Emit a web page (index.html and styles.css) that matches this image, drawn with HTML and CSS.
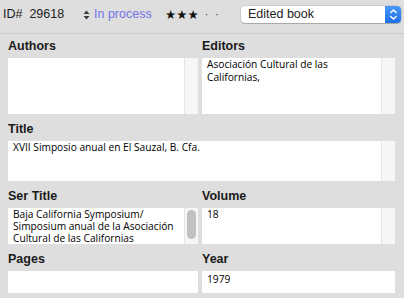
FILE: index.html
```html
<!DOCTYPE html>
<html>
<head>
<meta charset="utf-8">
<link rel="stylesheet" href="styles.css">
</head>
<body>
<div class="toolbar">
  <span class="tb-id">ID#&nbsp; 29618</span>
  <span class="tb-status">
    <svg class="updown" width="7" height="10" viewBox="0 0 7 10"><path d="M3.5 0.5 L6.5 4 H0.5 Z M3.5 9.5 L6.5 6 H0.5 Z" fill="#3a3a3a"/></svg>
    <span class="status-text">In process</span>
  </span>
  <span class="tb-stars"><span class="stars">★★★</span><span class="dot">·</span><span class="dot">·</span></span>
  <div class="popup">
    <span class="popup-label">Edited book</span>
    <span class="popup-btn">
      <svg width="9" height="13" viewBox="0 0 9 13"><path d="M1.8 4.6 L4.5 1.9 L7.2 4.6 M1.8 8.4 L4.5 11.1 L7.2 8.4" fill="none" stroke="#fff" stroke-width="1.4" stroke-linecap="round" stroke-linejoin="round"/></svg>
    </span>
  </div>
</div>
<div class="form">
  <div class="field">
    <div class="label">Authors</div>
    <div class="box h-authors"><div class="text"></div><div class="track"></div></div>
  </div>
  <div class="field">
    <div class="label">Editors</div>
    <div class="box h-authors"><div class="text">Asociación Cultural de las Californias,</div><div class="track"></div></div>
  </div>
  <div class="field wide">
    <div class="label">Title</div>
    <div class="box h-title"><div class="text">XVII Simposio anual en El Sauzal, B. Cfa.</div><div class="track"></div></div>
  </div>
  <div class="field">
    <div class="label">Ser Title</div>
    <div class="box h-ser"><div class="text tight">Baja California Symposium/ Simposium anual de la Asociación Cultural de las Californias</div><div class="track"><div class="thumb"></div></div></div>
  </div>
  <div class="field">
    <div class="label">Volume</div>
    <div class="box h-ser"><div class="text">18</div><div class="track"></div></div>
  </div>
  <div class="field">
    <div class="label">Pages</div>
    <div class="box h-single"><div class="text single"></div></div>
  </div>
  <div class="field">
    <div class="label">Year</div>
    <div class="box h-single"><div class="text single">1979</div></div>
  </div>
</div>
</body>
</html>
```

FILE: styles.css
```css
html, body {
  margin: 0;
  padding: 0;
  background: #dedede;
}
body {
  width: 404px;
  height: 298px;
  overflow: hidden;
  font-family: "Liberation Sans", Arial, sans-serif;
  color: #1c1c1c;
}
.toolbar {
  display: flex;
  align-items: flex-start;
  height: 27px;
  padding: 6px 0 0 3px;
  border-bottom: 1px solid #cdcdcd;
  font-size: 12.5px;
  line-height: 17px;
}
.tb-id {
  width: 80px;
  color: #222;
}
.tb-status {
  width: 82px;
  display: flex;
  align-items: center;
  height: 17px;
}
.updown {
  margin-right: 4px;
}
.status-text {
  color: #7474e6;
}
.tb-stars {
  width: 76px;
  display: flex;
  align-items: center;
  height: 17px;
}
.stars {
  font-family: "DejaVu Sans", sans-serif;
  font-size: 12.5px;
  letter-spacing: 0;
  color: #111;
}
.dot {
  font-family: "DejaVu Sans", sans-serif;
  font-size: 11px;
  margin-left: 6px;
  color: #444;
}
.dot + .dot {
  margin-left: 7px;
}
.popup {
  width: 160px;
  height: 17px;
  box-sizing: border-box;
  display: flex;
  background: #fff;
  border-radius: 4px;
  box-shadow: 0 0 0 0.5px rgba(0,0,0,0.18), 0 1px 1px rgba(0,0,0,0.18);
}
.popup-label {
  flex: 1;
  padding-left: 7px;
  font-size: 12.5px;
  line-height: 17px;
  color: #222;
}
.popup-btn {
  width: 16px;
  height: 17px;
  display: flex;
  align-items: center;
  justify-content: center;
  background: linear-gradient(#4a97f8, #1f6fe6);
  border-radius: 0 4px 4px 0;
}
.form {
  display: grid;
  grid-template-columns: 190px 193px;
  column-gap: 4px;
  row-gap: 7px;
  padding: 4px 9px 0 8px;
}
.field.wide {
  grid-column: 1 / span 2;
}
.label {
  font-weight: bold;
  font-size: 12.5px;
  line-height: 16px;
  height: 16px;
  margin-bottom: 4px;
  color: #1a1a1a;
}
.box {
  display: flex;
  background: #fff;
}
.h-authors { height: 56px; }
.h-title { height: 40px; }
.h-ser { height: 36px; }
.h-single { height: 22px; }
.text {
  flex: 1;
  padding: 0 6px 0 5px;
  font-family: "Open Sans", sans-serif;
  font-size: 10.2px;
  line-height: 12.5px;
  color: #000;
  overflow: hidden;
}
.text.tight {
  line-height: 12px;
}
.text.single {
  padding-top: 2px;
}
.track {
  width: 14px;
  background: #f6f6f6;
  border-left: 1px solid #e6e6e6;
  display: flex;
  justify-content: center;
  padding-top: 2px;
  box-sizing: border-box;
}
.thumb {
  width: 9px;
  height: 29px;
  border-radius: 5px;
  background: #c1c1c1;
}
```
